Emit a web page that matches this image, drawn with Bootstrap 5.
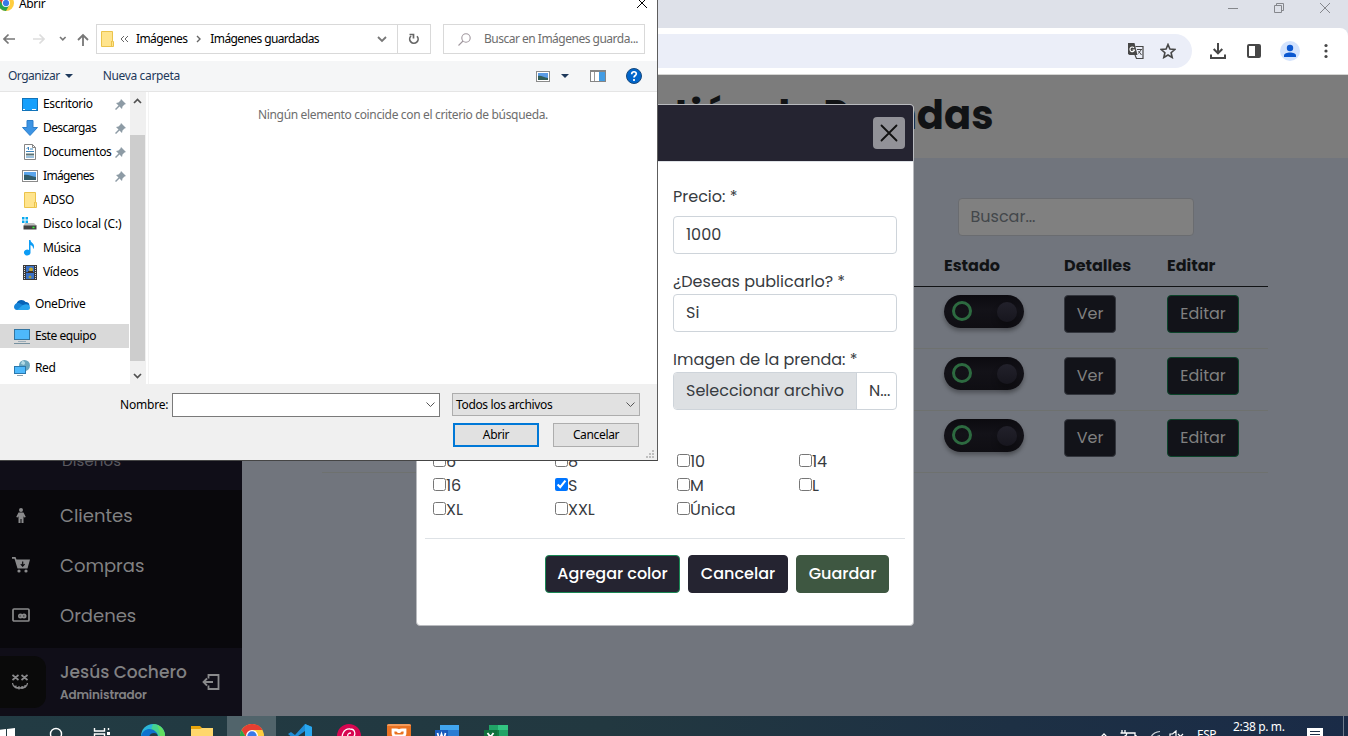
<!DOCTYPE html>
<html lang="es">
<head>
<meta charset="utf-8">
<meta name="viewport" content="width=device-width, initial-scale=1">
<title>Gestión de Prendas</title>
<link href="https://cdn.jsdelivr.net/npm/bootstrap@5.3.0/dist/css/bootstrap.min.css" rel="stylesheet">
<style>
  html, body { height: 736px; overflow: hidden; }
  body { font-family: Poppins, Inter, sans-serif; font-size: 16px; color: #212529; }
  svg { display: block; flex: none; }
  .desk { width: 1348px; height: 736px; overflow: hidden; }

  /* Browser frame */
  .tabstrip { height: 28px; background: #dee1e9; }
  .tabstrip .ctl { width: 46px; display: flex; justify-content: center; padding-top: 2px; }
  .frame { background: #dee1e9; }
  .addressrow { height: 47px; background: #fff; border-radius: 0 8px 0 0; border-bottom: 1px solid #d5d5d3; padding: 6px 11px 6px 0; }
  .omnibox { height: 34px; width: 1192px; border-radius: 0 17px 17px 0; background: #ebeef8; padding-right: 16px; }

  /* Page */
  .page { height: 641px; background: #71757d; }
  .sidebar { width: 242px; background: #09080c; color: #818183; }
  .submenu { height: 415px; background: #100e18; font-size: 15px; padding: 0 0 18px 62px; color: #5b5a60; letter-spacing: .1px; }
  .side-item { height: 50px; padding-left: 12px; font-size: 18px; }
  .side-item svg { margin-right: 30px; }
  .side-list { height: 158px; }
  .profile { height: 68px; background: #100e18; }
  .avatar { width: 46px; height: 52px; background: #0a0a0a; border-radius: 0 12px 12px 0; padding-left: 12px; }
  .pname { font-size: 17px; font-weight: 500; line-height: 24px; }
  .prole { font-size: 12px; font-weight: 600; line-height: 20px; padding-top: 1px; height: 20px; letter-spacing: -.15px; }
  .page-head { height: 83px; background: #7c7c7c; }
  .page-head h1 { font-size: 40px; font-weight: 700; color: #111315; margin: 0; white-space: nowrap; line-height: 80px; }
  .searchbox { width: 236px; height: 38px; background: #808080; border: 1px solid #6a6c70; color: #43474b; margin: 40px 0 0 716px; padding: 0 11.500px; line-height: 36px; border-radius: 4px; }
  .gtable { width: 946px; margin: 9px 0 0 80px; table-layout: fixed; border-collapse: separate; border-spacing: 0; color: #111315; }
  .gtable th { height: 42px; padding: 0 8px; vertical-align: middle; font-weight: 700; font-size: 16px; border-bottom: 1px solid #111315; }
  .gtable td { height: 62px; padding: 8px; vertical-align: top; border-bottom: 1px solid #6e716f; }
  .gbtn { height: 38px; background: #121319; color: #808080; border: 1px solid #33363d; border-radius: 4px; padding: 0; width: 52px; display: block; }
  .gbtn.edit { width: 72px; border-color: #0c442a; }
  .switchy { width: 80px; height: 33px; border-radius: 17px; background: linear-gradient(#0c0b10, #131218 45%, #0f0e13); padding: 0 7px 0 8px; box-shadow: 0 3px 4px rgba(0,0,0,.3); }
  .switchy i { width: 20px; height: 20px; border-radius: 50%; border: 3px solid #2d6a40; margin-top: -1px; }
  .switchy b { width: 20px; height: 20px; border-radius: 50%; background: linear-gradient(#22212b, #17161e); margin-top: 1px; box-shadow: 0 5px 6px rgba(0,0,0,.25); }

  /* Garment form window */
  .sheet { position: absolute; left: 416px; top: 104px; width: 498px; height: 522px; background: #fff; border: 1px solid #b9bbbf; border-radius: 4px; color: #373b3f; }
  .sheet-head { height: 56px; background: #252431; border-radius: 3px 3px 0 0; padding-right: 8px; }
  .sheet-head span { width: 32px; height: 32px; border-radius: 4px; background: #929298; display: flex; align-items: center; justify-content: center; }
  .sheet-body { border-top: 1px solid #dee2e6; padding: 23px 8px 0; }
  .fields { width: 224px; margin: 0 8px 0 auto; }
  .fields label { display: block; line-height: 24px; height: 24px; white-space: nowrap; }
  .fbox { height: 38px; border: 1px solid #ced4da; border-radius: 4px; line-height: 35px; padding-left: 12px; overflow: hidden; white-space: nowrap; }
  .fbox.file { padding: 0; display: flex; }
  .fbox.file span { width: 183px; background: #dde0e3; border-right: 1px solid #ced4da; text-align: center; }
  .sizes { display: grid; grid-template-columns: repeat(4, 122px); grid-auto-rows: 24px; padding-left: 8px; margin-top: 40px; }
  .sizes label { display: flex; align-items: flex-start; line-height: 24px; }
  .sizes input { width: 13px; height: 13px; margin: 4px 0 0; }
  .sheet-foot { margin-top: 16px; border-top: 1px solid #dee2e6; padding: 16px 16px 0 0; }
  .fbtn { height: 38px; border-radius: 4px; color: #fff; font-weight: 500; background: #252431; border: 1px solid #252431; padding: 0; }

  /* File picker window */
  .picker { position: absolute; left: 0; top: 0; width: 658px; height: 461px; background: #fff; border-right: 1px solid #5d5d5d; border-bottom: 1px solid #454545; font-family: "Segoe UI", "Noto Sans", sans-serif; font-size: 12px; color: #000; line-height: 16px; letter-spacing: -.35px; white-space: nowrap; }
  .p-title { height: 24px; }
  .p-nav { height: 30px; letter-spacing: -.5px; }
  .p-box { height: 30px; border: 1px solid #d9d9d9; flex: none; }
  .p-tools { height: 31px; margin-top: 7px; background: #f5f6f7; border-bottom: 1px solid #e5e5e5; color: #1e395b; }
  .p-body { height: 292px; }
  .tree { width: 130px; }
  .tree div { height: 24px; display: flex; align-items: center; padding: 0 3px 0 22px; width: 129px; }
  .tree div.root { padding-left: 14px; margin-top: 8px; }
  .tree div.active { background: #d9d9d9; }
  .tree span { margin-left: 5px; flex: 1; }
  .scrollb { width: 16px; background: #f0f0f0; }
  .scrollb i { display: block; width: 15px; height: 226px; background: #cdcdcd; }
  .files { border-left: 1px solid #f3f3f3; margin-left: 2px; color: #6d6d6d; padding: 15px 0 0 109px; letter-spacing: -.34px; }
  .p-foot { height: 76px; background: #f0f0f0; padding: 9px 17px 0 120px; }
  .p-input { width: 268px; height: 24px; border: 1px solid #7a7a7a; background: #fff; margin-left: 5px; flex: none; }
  .p-select { width: 188px; height: 23px; border: 1px solid #adadad; background: #e1e1e1; margin-left: 12px; padding: 0 4px 0 3px; flex: none; }
  .p-btn { width: 86px; height: 24px; background: #e1e1e1; border: 1px solid #adadad; line-height: 21px; text-align: center; }
  .p-btn.main { border: 2px solid #0078d7; line-height: 20px; }

  /* Taskbar */
  .taskbar { height: 20px; overflow: hidden; background: linear-gradient(90deg, #223b43, #223840 45%, #1d3044 75%, #1a2b47); font-family: "Segoe UI", "Noto Sans", sans-serif; font-size: 12px; color: #fff; }
  .apps { margin-left: -18px; }
  .apps span { width: 49px; height: 40px; display: flex; align-items: center; justify-content: center; }
  .apps .open { background: #51646b; }
  .tray { padding-right: 4px; line-height: 16px; }
</style>
</head>
<body>
<div class="desk position-relative d-flex flex-column">

  <div class="tabstrip d-flex justify-content-end">
    <div class="ctl"><svg width="12" height="12" stroke="#85878c" fill="none"><path d="M1 6.500h10"/></svg></div>
    <div class="ctl"><svg width="12" height="12" stroke="#85878c" fill="none"><path d="M1.500 3.500h7v7h-7zM3.500 3.500v-2h7v7h-2"/></svg></div>
    <div class="ctl"><svg width="12" height="12" stroke="#85878c" fill="none"><path d="M1 1l10 10M11 1L1 11"/></svg></div>
  </div>
  <div class="frame"><div class="addressrow d-flex">
    <div class="omnibox d-flex align-items-center justify-content-end">
      <svg width="17" height="18" viewBox="0 0 17 18"><path d="M1 1h6.500l3 12H2.500L1 12z" fill="#474747"/><path d="M8.500 4.500h7.500v12H9.500L8 13" fill="none" stroke="#474747" stroke-width="1.200"/><path d="M7 5.800a2.300 2.300 0 1 0 .5 2.200H5.500" fill="none" stroke="#fff" stroke-width="1.100"/><path d="M10 7.500h5M14 7.500c-.5 2-2 3-3 4M11.500 9l3 4" fill="none" stroke="#474747"/></svg>
      <svg class="ms-3" width="16" height="16" viewBox="0 0 16 16"><path d="M8 1.500l1.900 4.600 4.900.4-3.700 3.200 1.100 4.800L8 12l-4.200 2.500 1.100-4.800L1.200 6.500l4.900-.4z" fill="none" stroke="#474747" stroke-width="1.600"/></svg>
    </div>
    <div class="d-flex align-items-center" style="padding-left:18px">
      <svg width="16" height="18" viewBox="0 0 16 18" fill="none" stroke="#474747" stroke-width="2"><path d="M8 1v10M3.700 7L8 11.300 12.300 7M1 12.500V16h14v-3.500"/></svg>
      <svg style="margin-left:20px" width="16" height="16"><rect x="2" y="2" width="12" height="12" rx="1" fill="none" stroke="#474747" stroke-width="2"/><path d="M9 2h5v12H9z" fill="#474747"/></svg>
      <svg style="margin-left:18px" width="20" height="20"><circle cx="10" cy="10" r="10" fill="#d3e3fd"/><circle cx="10" cy="7" r="3.200" fill="#0b57d0"/><path d="M4 16v-1.500C4 12.500 7 11.500 10 11.500s6 1 6 3V16z" fill="#0b57d0"/></svg>
      <svg style="margin-left:24px" width="4" height="16" fill="#474747"><circle cx="2" cy="2.500" r="1.600"/><circle cx="2" cy="8" r="1.600"/><circle cx="2" cy="13.500" r="1.600"/></svg>
    </div>
  </div></div>

  <div class="page d-flex">
    <nav class="sidebar d-flex flex-column">
      <div class="submenu d-flex align-items-end">Diseños</div>
      <div class="side-list">
        <div class="side-item d-flex align-items-center"><svg width="18" height="18" fill="#8a8a8c"><circle cx="9" cy="4" r="2"/><path d="M6.500 6.500h5L13.800 11l-1.500.5-.8-1.200V17H9.500v-4h-1v4h-2v-6.700l-.8 1.200-1.500-.5z"/></svg>Clientes</div>
        <div class="side-item d-flex align-items-center"><svg width="18" height="18" viewBox="0 0 18 18"><path d="M0 1h3.500l1 2.500H18L15.500 12.500H5.500L2.500 2.800H0z" fill="#8a8a8c"/><circle cx="7" cy="15" r="1.600" fill="#8a8a8c"/><circle cx="14" cy="15" r="1.600" fill="#8a8a8c"/><path d="M10.700 5.500v4.500M8.800 8.200l1.900 1.900 1.900-1.900" stroke="#09080c" stroke-width="1.200" fill="none"/></svg>Compras</div>
        <div class="side-item d-flex align-items-center"><svg width="18" height="18"><rect x="1" y="3" width="16" height="12" rx="1" fill="none" stroke="#8a8a8c" stroke-width="1.700"/><circle cx="8.500" cy="10" r="2.500" fill="#8a8a8c"/><circle cx="12" cy="10" r="2.500" fill="#8a8a8c"/><path d="M7.500 10h1.200M11 10h1.500" stroke="#222"/></svg>Ordenes</div>
      </div>
      <div class="profile d-flex align-items-center">
        <div class="avatar d-flex align-items-center"><svg width="16" height="18" fill="none" stroke="#8a8a8c"><path d="M.5 2l6 5M6.500 2l-6 5M9.500 2l6 5M15.500 2l-6 5" stroke-width="1.700"/><path d="M.5 10c1 7 14 7 15 0M1 12.500c4 3 10 3 14 0M4 12.500v3M7 13v3.500M10 13v3M13 12v3" stroke-width="1.200"/></svg></div>
        <div style="margin-left:14px;width:142px"><div class="pname">Jesús Cochero</div><div class="prole">Administrador</div></div>
        <svg width="18" height="18" fill="none" stroke="#8a8a8c" stroke-width="1.800"><path d="M6.500 5.500V2h10v14h-10v-3.500M1.500 9H11M5 5.500L1.500 9 5 12.500"/></svg>
      </div>
    </nav>
    <main class="flex-grow-1">
      <div class="page-head d-flex justify-content-center"><h1>Gestión de Prendas</h1></div>
      <div class="searchbox">Buscar...</div>
      <table class="gtable">
        <colgroup><col><col style="width:120px"><col style="width:103px"><col style="width:109px"></colgroup>
        <thead><tr><th></th><th>Estado</th><th>Detalles</th><th>Editar</th></tr></thead>
        <tbody>
          <tr><td></td><td><div class="switchy d-flex align-items-center justify-content-between"><i></i><b></b></div></td><td><button class="gbtn">Ver</button></td><td><button class="gbtn edit">Editar</button></td></tr>
          <tr><td></td><td><div class="switchy d-flex align-items-center justify-content-between"><i></i><b></b></div></td><td><button class="gbtn">Ver</button></td><td><button class="gbtn edit">Editar</button></td></tr>
          <tr><td></td><td><div class="switchy d-flex align-items-center justify-content-between"><i></i><b></b></div></td><td><button class="gbtn">Ver</button></td><td><button class="gbtn edit">Editar</button></td></tr>
        </tbody>
      </table>
    </main>
  </div>

  <div class="taskbar d-flex justify-content-between align-items-start">
    <div class="apps d-flex">
      <span><svg width="16" height="17" fill="#fff"><path d="M0 2l7-1v7H0zM8 1l8-1v8H8zM0 9h7v7l-7-1zM8 9h8v8l-8-1z"/></svg></span>
      <span><svg style="margin-left:-4px" width="18" height="18" fill="none" stroke="#fff" stroke-width="1.400"><circle cx="11" cy="7" r="5.500"/><path d="M7 11l-6 6"/></svg></span>
      <span><svg style="margin-left:-5px" width="18" height="18" fill="none" stroke="#fff" stroke-width="1.400"><path d="M1.500 1v3h10V1M1.500 17V7h10v10M15.500 1v2M15.500 9v8"/><path d="M14 6.500h3" stroke-width="3"/></svg></span>
      <span><svg style="margin-left:-1px" width="24" height="24"><circle cx="12" cy="12" r="12" fill="#2bb5d8"/><path d="M12 0c8 0 12 6 12 12l-6 2c-1-5-4-7-8-8z" fill="#45d291"/><path d="M16 1c5 2 8 6 8 11l-5 2c0-6-1-9-3-13z" fill="#63de60"/><path d="M0 12C2 4 11 3 15 8c2 2 2 4 2 5H8c-2 2-1 6 0 10C3 21 0 17 0 12z" fill="#0d72cf"/><path d="M8 14c0-3 2-5 5-5s4 2 4 5z" fill="#223b43"/></svg></span>
      <span><svg style="margin-left:-2px" width="22" height="20"><path d="M0 0h9l2 2h11v18H0z" fill="#e9a50b"/><path d="M0 3h9l2-1h11v18H0z" fill="#ffd76d"/></svg></span>
      <span class="open"><svg width="24" height="24" viewBox="0 0 24 24"><circle cx="12" cy="12" r="12" fill="#ffcd3e"/><path d="M1.600 6A12 12 0 0 1 22.400 6H12L7 15z" fill="#e63e32"/><path d="M1.600 6A12 12 0 0 0 12 24l5-9H7z" fill="#2aa24c"/><circle cx="12" cy="12" r="6" fill="#fff"/><circle cx="12" cy="12" r="4.700" fill="#3979e8"/></svg></span>
      <span><svg style="margin-left:-2px" width="24" height="24"><path d="M17 0l7 3v18l-7 3L0 10l3-2 4 3z" fill="#1f8ed8"/><path d="M17 0l7 3v18l-7 3z" fill="#29a8f0"/><path d="M17 7l-7 5 7 5z" fill="#223a42"/></svg></span>
      <span><svg style="margin-left:-1px" width="24" height="24"><circle cx="12" cy="12" r="12" fill="#d70751"/><path d="M8 19C2 12 7 4.500 13 5c6 0 6 7 2 9-5 1-6-5-1-5" fill="none" stroke="#fff" stroke-width="1.300"/></svg></span>
      <span><svg width="24" height="24"><rect width="24" height="24" rx="2" fill="#ea7222"/><path d="M0 2q0-2 2-2h20q2 0 2 2z" fill="#f29a5a"/><path d="M6 6h3q3 0 3 3 0-3 3-3h3v3q0 3-3 3H9q-3 0-3-3zM9 12q-3 0-3 6M15 12q3 0 3 6" fill="none" stroke="#fff" stroke-width="2.800"/></svg></span>
      <span><svg style="margin-left:-1px" width="24" height="22"><path d="M5 0h19v22H5z" fill="#2b7cd3"/><path d="M5 0h19v5H5z" fill="#41a5ee"/><path d="M0 5h13v13H0z" fill="#185abd"/><path d="M2.500 8l2 7 2-6 2 6 2-7" stroke="#fff" stroke-width="1.700" fill="none"/></svg></span>
      <span><svg style="margin-left:-1px" width="24" height="22"><path d="M5 0h19v22H5z" fill="#21a366"/><path d="M14 0h10v5H14z" fill="#33c481"/><path d="M5 5h10v17H5z" fill="#107c41"/><path d="M0 5h13v13H0z" fill="#0f703b"/><path d="M3.500 8l6 8M9.500 8l-6 8" stroke="#fff" stroke-width="1.800"/></svg></span>
    </div>
    <div class="tray d-flex">
      <svg style="margin-top:16px" width="10" height="8" fill="none" stroke="#fff" stroke-width="1.300"><path d="M1 6l4-4 4 4"/></svg>
      <svg style="margin:14px 0 0 10px" width="18" height="14" fill="none" stroke="#fff" stroke-width="1.300"><path d="M3 0v3M6 0v3M1.500 3h6v2l-3 2v4M8 3h8v8H6M17 5v4"/></svg>
      <svg style="margin:14px 0 0 11px" width="16" height="14" fill="none" stroke="#cfd4da" stroke-width="1.200"><path d="M2 10C3 5 7 2 12 1.500M5.500 11c1-3 3-5 6.500-5.500M9 12c.5-2 1.500-3 3-3"/></svg>
      <svg style="margin:14px 0 0 4px" width="17" height="14" fill="none" stroke="#fff" stroke-width="1.200"><path d="M2 4h2.500L8 1v12L4.500 9H2zM10 4l5 5M15 4l-5 5"/></svg>
      <div style="margin:11px 0 0 12px;width:36px;letter-spacing:-.5px">ESP</div>
      <div style="margin-top:3px;width:74px;letter-spacing:-.35px">2:38 p. m.</div>
      <svg style="margin-top:12px" width="16" height="16"><path d="M0 0h16v14H8l-3 3v-3H0z" fill="#fff"/><path d="M3 3.500h10M3 6.500h10" stroke="#1b2d45"/></svg>
      <svg style="margin-left:20px" width="1" height="20"><path d="M.5 0v20" stroke="#6d7a8b"/></svg>
    </div>
  </div>

  <section class="sheet">
    <div class="sheet-head d-flex align-items-center justify-content-end"><span><svg width="18" height="18" fill="none" stroke="#111" stroke-width="1.800" stroke-linecap="round"><path d="M1.500 1.500l15 15M16.500 1.500l-15 15"/></svg></span></div>
    <div class="sheet-body">
      <div class="fields">
        <label>Precio: *</label><div class="fbox" style="margin-top:7px">1000</div>
        <label style="margin-top:16px">¿Deseas publicarlo? *</label><div class="fbox">Si</div>
        <label style="margin-top:16px">Imagen de la prenda: *</label><div class="fbox file"><span>Seleccionar archivo</span><div style="padding-left:12px">N...</div></div>
      </div>
      <div class="sizes">
        <label><input type="checkbox">6</label><label><input type="checkbox">8</label><label><input type="checkbox">10</label><label><input type="checkbox">14</label>
        <label><input type="checkbox">16</label><label><input type="checkbox" checked>S</label><label><input type="checkbox">M</label><label><input type="checkbox">L</label>
        <label><input type="checkbox">XL</label><label><input type="checkbox">XXL</label><label><input type="checkbox">Única</label>
      </div>
      <div class="sheet-foot d-flex justify-content-end gap-2">
        <button class="fbtn" style="width:135px;border-color:#198754">Agregar color</button>
        <button class="fbtn" style="width:100px">Cancelar</button>
        <button class="fbtn" style="width:93px;background:#3e5741;border-color:#3e5741">Guardar</button>
      </div>
    </div>
  </section>

  <section class="picker">
    <div class="p-title d-flex justify-content-between" style="padding-right:9px">
      <div class="d-flex"><svg style="margin:-5px 5px 0 -2px" width="16" height="16" viewBox="0 0 24 24"><circle cx="12" cy="12" r="12" fill="#ffcd3e"/><path d="M1.600 6A12 12 0 0 1 22.400 6H12L7 15z" fill="#e63e32"/><path d="M1.600 6A12 12 0 0 0 12 24l5-9H7z" fill="#2aa24c"/><circle cx="12" cy="12" r="6" fill="#fff"/><circle cx="12" cy="12" r="4.700" fill="#3979e8"/></svg><span style="margin-top:-4px">Abrir</span></div>
      <svg style="margin-top:-3px" width="12" height="12" stroke="#000" fill="none"><path d="M1 1l10 10M11 1L1 11"/></svg>
    </div>
    <div class="p-nav d-flex align-items-center">
      <svg style="margin-left:3px" width="12" height="12" fill="none" stroke="#777" stroke-width="1.700"><path d="M12 6H1M5.500 1.500L1 6l4.500 4.500"/></svg>
      <svg style="margin-left:18px" width="12" height="12" fill="none" stroke="#ddd" stroke-width="1.700"><path d="M0 6h11M6.500 1.500L11 6l-4.500 4.500"/></svg>
      <svg style="margin-left:14px" width="8" height="6" fill="none" stroke="#777" stroke-width="1.600"><path d="M1 1l2.800 2.800L6.600 1"/></svg>
      <svg style="margin-left:10px" width="12" height="13" fill="none" stroke="#777" stroke-width="1.800"><path d="M6 13V2M1 7l5-5 5 5"/></svg>
      <div class="p-box d-flex align-items-center" style="margin-left:7px;width:302px;padding-left:4px">
        <svg width="13" height="16"><path d="M.5.500h11v10h1v5H.500z" fill="#ffe48d" stroke="#ebc34b"/><path d="M10.500 10v5" stroke="#ebc34b"/></svg>
        <svg style="margin-left:6px" width="9" height="8" fill="none" stroke="#666"><path d="M4 1L1 4l3 3M8 1L5 4l3 3"/></svg>
        <span style="margin-left:7px;letter-spacing:-.6px">Imágenes</span>
        <svg style="margin-left:9px" width="5" height="8" fill="none" stroke="#666" stroke-width="1.400"><path d="M1 1l3 3-3 3"/></svg>
        <span style="margin-left:9px;letter-spacing:-.6px">Imágenes guardadas</span>
        <svg class="ms-auto" style="margin-right:10px" width="10" height="7" fill="none" stroke="#777" stroke-width="1.800"><path d="M1 1l4 4 4-4"/></svg>
      </div>
      <div class="p-box d-flex align-items-center justify-content-center" style="width:34px;margin-left:-1px"><svg width="12" height="12" fill="none" stroke="#666" stroke-width="1.700"><path d="M9 3.200A4.200 4.200 0 1 1 3 3M1.500 1.500h4v4"/></svg></div>
      <div class="p-box d-flex align-items-center" style="width:202px;margin-left:12px;padding-left:14px;color:#6d6d6d"><svg width="13" height="13" fill="none" stroke="#a0979e" stroke-width="1.100"><circle cx="8" cy="5" r="4.200"/><path d="M5 8L.5 12.500"/></svg><span style="margin-left:13px">Buscar en Imágenes guarda...</span></div>
    </div>
    <div class="p-tools d-flex align-items-center">
      <span style="margin-left:8px;letter-spacing:-.5px">Organizar</span><svg style="margin-left:5px" width="8" height="4" fill="#1e395b"><path d="M0 0h8L4 4z"/></svg>
      <span style="margin-left:30px">Nueva carpeta</span>
      <svg class="ms-auto" width="14" height="11"><rect x=".5" y=".5" width="13" height="10" fill="#fff" stroke="#8b8b8b"/><path d="M2 2h10v5H2z" fill="#5a9be5"/><path d="M2 5c3-1 6 2 10 2v2H2z" fill="#315d57"/></svg>
      <svg style="margin-left:11px" width="8" height="4" fill="#1e395b"><path d="M0 0h8L4 4z"/></svg>
      <svg style="margin-left:21px" width="16" height="12"><rect x=".5" y=".5" width="15" height="11" fill="#fff" stroke="#858585"/><path d="M0 1h16" stroke="#858585" stroke-width="2"/><path d="M4.500 2v9" stroke="#999"/><path d="M9 2h6v9H9z" fill="#429ce3"/></svg>
      <svg style="margin:0 15px 0 20px" width="16" height="16"><circle cx="8" cy="8" r="7.500" fill="#0065cb" stroke="#17497c"/><path d="M5.700 6.200C5.500 3 10.500 3 10.300 6 10.200 7.500 8 7.600 8 9.500M8 11v2" fill="none" stroke="#fff" stroke-width="1.700"/></svg>
    </div>
    <div class="p-body d-flex">
      <div class="tree">
        <div><svg width="16" height="13"><rect x=".5" y=".5" width="15" height="12" fill="#16a0fc" stroke="#1173b9"/><path d="M1 11.500h2M10 11.500h4" stroke="#fff"/></svg><span>Escritorio</span><svg width="11" height="11"><path d="M6 0l5 5-1.500.5-2 2L7 10 4.500 7.500 1 11 0 10l3.500-3.500L1 4l2.500-.5 2-2z" fill="#8d9ba5"/></svg></div>
        <div><svg width="16" height="16"><path d="M5 .5h6v7h4.500L8 15.500.500 7.500H5z" fill="#3c94e4" stroke="#2c7fcc"/></svg><span style="letter-spacing:-.6px">Descargas</span><svg width="11" height="11"><path d="M6 0l5 5-1.500.5-2 2L7 10 4.500 7.500 1 11 0 10l3.500-3.500L1 4l2.500-.5 2-2z" fill="#8d9ba5"/></svg></div>
        <div><svg width="16" height="16"><path d="M2.500.5h8l3 3v12h-11z" fill="#fff" stroke="#858585"/><path d="M10.500.5v3h3" fill="none" stroke="#858585"/><path d="M4.500 5l2-2v3M8 5h3M4 7.500h8M4 13h8" fill="none" stroke="#3b84bd"/><path d="M4 10.500h8" stroke="#597276" stroke-width="2"/></svg><span>Documentos</span><svg width="11" height="11"><path d="M6 0l5 5-1.500.5-2 2L7 10 4.500 7.500 1 11 0 10l3.500-3.500L1 4l2.500-.5 2-2z" fill="#8d9ba5"/></svg></div>
        <div><svg width="16" height="12"><rect x=".5" y=".5" width="15" height="11" fill="#fff" stroke="#8b8b8b"/><path d="M2 2h12v5H2z" fill="#5aa5ec"/><path d="M2 5c4-1 8 2 12 2v3H2z" fill="#315d6c"/></svg><span style="letter-spacing:-.65px">Imágenes</span><svg width="11" height="11"><path d="M6 0l5 5-1.500.5-2 2L7 10 4.500 7.500 1 11 0 10l3.500-3.500L1 4l2.500-.5 2-2z" fill="#8d9ba5"/></svg></div>
        <div><svg width="16" height="16"><path d="M2.500.5h11v10h1v5h-12z" fill="#ffe48d" stroke="#ebc34b"/><path d="M12.500 10v5" stroke="#ebc34b"/></svg><span>ADSO</span></div>
        <div><svg width="16" height="14"><path d="M0 0h2.500v2.500H0zM3.500 0H6v2.500H3.500zM0 3.500h2.500V6H0zM3.500 3.500H6V6H3.500z" fill="#08a9ef"/><path d="M3 6h9l3 3H1.500z" fill="#bdbdbd"/><path d="M1.500 8.500h13v4h-13z" fill="#414141"/><path d="M10.500 10.500h2" stroke="#3f3" stroke-width="1.500"/></svg><span style="letter-spacing:-.15px">Disco local (C:)</span></div>
        <div><svg width="16" height="16"><path d="M7 0h1.500c0 3 4 3 3.500 7-.2 1-.7 2-1 2 .2-3-1-3.500-2.500-4v8A3.300 3 0 1 1 7 10z" fill="#0c9cf5"/></svg><span>Música</span></div>
        <div><svg width="16" height="15"><path d="M1 0h14v15H1z" fill="#3b3b3b"/><path d="M4 1h8v6H4zM4 8h8v6H4z" fill="#3a72c8"/><circle cx="9" cy="4.500" r="2" fill="#c5a92b"/><path d="M6 6h5v2H6z" fill="#3f3326"/><path d="M2.500 1v14M13.500 1v14" stroke="#ddd" stroke-dasharray="1 1"/><circle cx="8" cy="12" r="1.500" fill="#a39a3b"/></svg><span>Vídeos</span></div>
        <div class="root"><svg width="16" height="11"><path d="M2.500 5C3 0 10 0 11.500 3c3-.5 4 2 4 4L8 9 1 7z" fill="#0563b8"/><path d="M0 8c0-3 3-5 6-3.500L14 9l-2 2H3C1 11 0 9.500 0 8z" fill="#1684d8"/><path d="M3 11l6-5c4-2 7 0 7 2.500S14 11 13 11z" fill="#27a4ee"/></svg><span>OneDrive</span></div>
        <div class="root active"><svg width="16" height="15"><rect x=".5" y=".5" width="15" height="10" fill="#4eb9fc" stroke="#3375a1"/><path d="M4 12.500h8" stroke="#9cadb8"/><path d="M0 14.500h16" stroke="#76909f"/></svg><span style="letter-spacing:-.45px">Este equipo</span></div>
        <div class="root"><svg width="16" height="16"><circle cx="10.500" cy="5.500" r="5.500" fill="#6ba6bd"/><path d="M8 1c3 0 4 2 2 4L7 4z" fill="#b2dae5"/><rect x=".5" y="6.500" width="11" height="7" fill="#4eb9fc" stroke="#2b78ad"/><path d="M3 15.500h6" stroke="#8da0ac"/></svg><span>Red</span></div>
      </div>
      <div class="scrollb d-flex flex-column">
        <svg style="margin:6px 0 31px 3px" width="9" height="6" fill="none" stroke="#505050" stroke-width="1.700"><path d="M1 5l3.500-3.500L8 5"/></svg><i></i>
        <svg style="margin:12px 0 0 3px" width="9" height="6" fill="none" stroke="#505050" stroke-width="1.700"><path d="M1 1l3.500 3.500L8 1"/></svg>
      </div>
      <div class="files">Ningún elemento coincide con el criterio de búsqueda.</div>
    </div>
    <div class="p-foot position-relative">
      <div class="d-flex">
        <div style="width:47px;padding-top:4px;letter-spacing:-.2px">Nombre:</div>
        <div class="p-input d-flex align-items-center justify-content-end pe-1"><svg width="9" height="6" fill="none" stroke="#555"><path d="M.5.500l4 4 4-4"/></svg></div>
        <div class="p-select d-flex align-items-center justify-content-between"><span>Todos los archivos</span><svg width="9" height="6" fill="none" stroke="#555"><path d="M.5.500l4 4 4-4"/></svg></div>
      </div>
      <div class="d-flex justify-content-end" style="margin:6px 1px 0 0;gap:14px"><div class="p-btn main">Abrir</div><div class="p-btn">Cancelar</div></div>
      <svg class="position-absolute bottom-0 end-0" style="margin:0 3px 2px 0" width="8" height="8" fill="#bfbfbf"><path d="M6 0h2v2H6zM3 3h2v2H3zM6 3h2v2H6zM0 6h2v2H0zM3 6h2v2H3zM6 6h2v2H6z"/></svg>
    </div>
  </section>
</div>
<script src="https://cdn.jsdelivr.net/npm/bootstrap@5.3.0/dist/js/bootstrap.bundle.min.js"></script>
</body>
</html>
